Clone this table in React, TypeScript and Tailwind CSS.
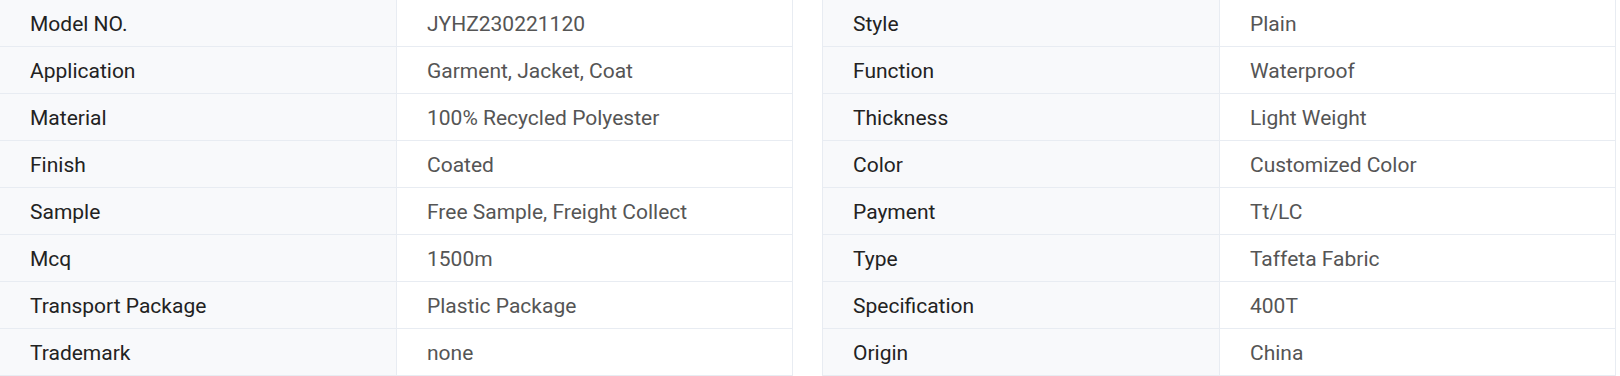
const left: [string, string][] = [
  ["Model NO.", "JYHZ230221120"],
  ["Application", "Garment, Jacket, Coat"],
  ["Material", "100% Recycled Polyester"],
  ["Finish", "Coated"],
  ["Sample", "Free Sample, Freight Collect"],
  ["Mcq", "1500m"],
  ["Transport Package", "Plastic Package"],
  ["Trademark", "none"],
];

const right: [string, string][] = [
  ["Style", "Plain"],
  ["Function", "Waterproof"],
  ["Thickness", "Light Weight"],
  ["Color", "Customized Color"],
  ["Payment", "Tt/LC"],
  ["Type", "Taffeta Fabric"],
  ["Specification", "400T"],
  ["Origin", "China"],
];

function InfoTable({ rows, bordered }: { rows: [string, string][]; bordered?: boolean }) {
  return (
    <div
      className={
        "grid grid-cols-[397px_1fr] border-r border-[#e8ecf2] " +
        (bordered ? "w-[794px] border-l" : "w-[793px]")
      }
    >
      {rows.map(([label, value]) => (
        <div key={label} className="contents">
          <div className="h-[47px] flex items-center pl-[30px] pt-[3px] bg-[#f8f9fb] border-b border-r border-[#e8ecf2] text-[#222222]">
            {label}
          </div>
          <div className="h-[47px] flex items-center pl-[30px] pt-[3px] bg-white border-b border-[#e8ecf2] text-[#555555]">
            {value}
          </div>
        </div>
      ))}
    </div>
  );
}

export default function App() {
  return (
    <div className="w-[1620px] h-[376px] overflow-hidden bg-white flex gap-[29px] text-[21px] leading-none font-['Roboto',sans-serif]">
      <InfoTable rows={left} />
      <InfoTable rows={right} bordered />
    </div>
  );
}
